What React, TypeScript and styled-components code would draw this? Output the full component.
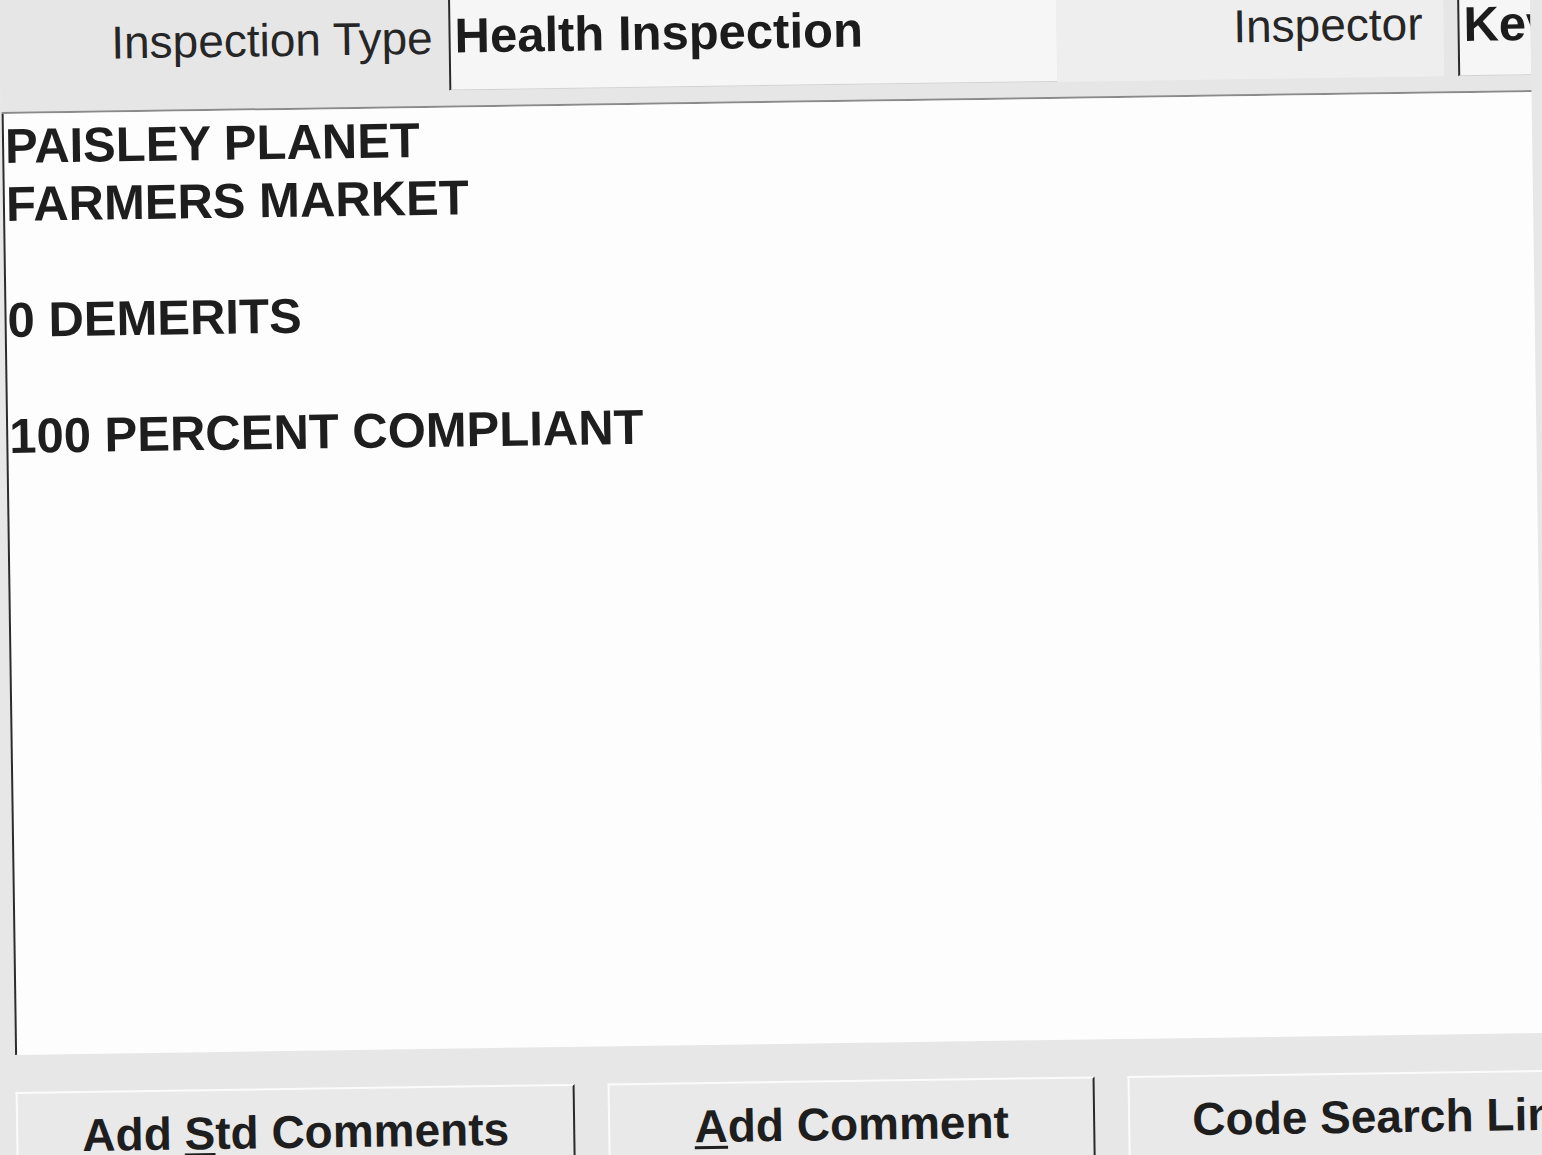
import React from "react";
import styled, { createGlobalStyle } from "styled-components";

const GlobalStyle = createGlobalStyle`
  html, body {
    margin: 0;
    padding: 0;
    background: #e7e7e7;
    overflow: hidden;
  }
  body {
    font-family: "Liberation Sans", Arial, Helvetica, sans-serif;
  }
`;

/* The reference is a slightly tilted scan of the form */
const Scan = styled.div`
  width: 1530px;
  transform: rotate(-0.82deg);
  transform-origin: 0 0;
  color: #1f1f1f;
`;

const Header = styled.header`
  display: flex;
  align-items: stretch;
  height: 91px;
  padding: 6px 0 15px;
  background: #e6e6e6;
  border-bottom: 2px solid #8a8a8a;
  overflow: hidden;
`;

const FieldLabel = styled.div<{ $width: number; $padTop: number; $padRight: number; $light?: boolean }>`
  flex: 0 0 ${(p) => p.$width}px;
  box-sizing: border-box;
  padding: ${(p) => p.$padTop}px ${(p) => p.$padRight}px 0 0;
  background: ${(p) => (p.$light ? "#eeeeee" : "transparent")};
  font-size: 46px;
  font-weight: 400;
  line-height: 1.15;
  text-align: right;
  white-space: nowrap;
  overflow: hidden;
  color: #262626;
`;

const FieldValue = styled.div<{ $width?: number; $gapLeft?: number; $padTop?: number }>`
  flex: ${(p) => (p.$width ? `0 0 ${p.$width}px` : "1 1 auto")};
  margin-left: ${(p) => p.$gapLeft ?? 0}px;
  box-sizing: border-box;
  background: #f6f6f6;
  border-left: 2px solid #2a2a2a;
  border-bottom: 1px solid #d2d2d2;
  padding: ${(p) => p.$padTop ?? 8}px 0 0 4px;
  font-size: 49px;
  font-weight: 700;
  line-height: 1.15;
  white-space: nowrap;
  overflow: hidden;
  color: #1c1c1c;
`;

const Memo = styled.main`
  height: 941px;
  box-sizing: border-box;
  background: #fdfdfd;
  border-left: 2px solid #2c2c2c;
  padding: 3px 0 0 1px;
  font-size: 49px;
  font-weight: 700;
  line-height: 58px;
  white-space: pre-line;
  color: #1e1e1e;
`;

const ButtonRow = styled.footer`
  display: flex;
  gap: 33px;
  padding-top: 37px;
  height: 120px;
`;

const ActionButton = styled.button<{ $width: number }>`
  flex: 0 0 ${(p) => p.$width}px;
  height: 110px;
  box-sizing: border-box;
  display: flex;
  justify-content: center;
  align-items: flex-start;
  padding: 16px 0 0;
  margin: 0;
  background: #e9e9e9;
  border: none;
  border-top: 2px solid #fbfbfb;
  border-left: 2px solid #fbfbfb;
  border-right: 2px solid #2a2a2a;
  font-family: "Liberation Sans", Arial, Helvetica, sans-serif;
  font-size: 46px;
  font-weight: 700;
  line-height: 1.15;
  color: #1e1e1e;
  white-space: nowrap;
`;

const Mnemonic = styled.span`
  text-decoration: underline;
  text-decoration-thickness: 3px;
  text-underline-offset: 4px;
`;

const memoText = `PAISLEY PLANET
FARMERS MARKET

0 DEMERITS

100 PERCENT COMPLIANT`;

export default function App() {
  return (
    <>
      <GlobalStyle />
      <Scan>
        <Header>
          <FieldLabel $width={448} $padTop={12} $padRight={16}>
            Inspection Type
          </FieldLabel>
          <FieldValue $width={608} $padTop={8}>
            Health Inspection
          </FieldValue>
          <FieldLabel $width={387} $padTop={12} $padRight={21} $light>
            Inspector
          </FieldLabel>
          <FieldValue $gapLeft={14} $padTop={11}>
            Kevin
          </FieldValue>
        </Header>
        <Memo>{memoText}</Memo>
        <ButtonRow>
          <ActionButton $width={559}>
            Add&nbsp;<Mnemonic>S</Mnemonic>td Comments
          </ActionButton>
          <ActionButton $width={487}>
            <Mnemonic>A</Mnemonic>dd Comment
          </ActionButton>
          <ActionButton $width={517}>Code Search Link</ActionButton>
        </ButtonRow>
      </Scan>
    </>
  );
}
